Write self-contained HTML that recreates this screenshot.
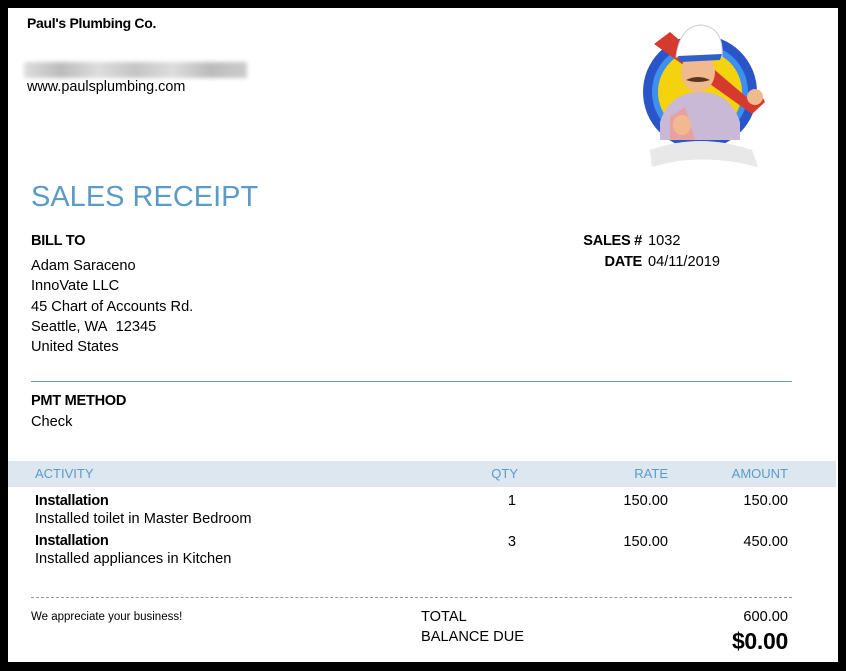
<!DOCTYPE html>
<html><head><meta charset="utf-8"><style>
html,body{margin:0;padding:0;}
body{width:846px;height:671px;background:#000;position:relative;overflow:hidden;font-family:"Liberation Sans",Arial,sans-serif;color:#000;}
#pg{position:absolute;left:8px;top:8px;width:830px;height:654px;background:#fff;}
.a{position:absolute;white-space:nowrap;}
.b{font-weight:bold;letter-spacing:-0.3px;}
.t{font-size:14.6px;}
.h{color:#5b9bc8;font-size:13px;}
.r{text-align:right;}
</style></head><body>
<div id="pg"></div>
<div class="a b" style="left:27px;top:15px;font-size:14px;">Paul's Plumbing Co.</div>
<div class="a" style="left:24px;top:62px;width:223px;height:16px;background:linear-gradient(90deg,#ddd,#bbb,#ddd,#c4c4c4,#ddd,#bbb,#ccc);filter:blur(2px);"></div>
<div class="a" style="left:27px;top:79px;font-size:14.4px;">www.paulsplumbing.com</div>

<svg class="a" style="left:640px;top:22px" width="130" height="150" viewBox="0 0 130 150">
<circle cx="60" cy="70" r="57" fill="#2a55c8"/>
<circle cx="60" cy="70" r="48" fill="#3d8ff0"/>
<circle cx="60" cy="70" r="42" fill="#f5d20e"/>
<path d="M14 22 L30 10 L110 78 L120 70 L125 80 L112 92 Z" fill="#d63a2e"/>
<path d="M20 100 Q30 70 60 70 Q90 70 100 100 L100 118 L20 118 Z" fill="#c9b8d6"/>
<path d="M30 95 L45 85 L55 118 L30 118 Z" fill="#e9a0a0"/>
<ellipse cx="58" cy="50" rx="17" ry="20" fill="#f0b98e"/>
<path d="M36 35 Q40 3 62 3 Q84 6 82 35 Z" fill="#fff" stroke="#ccd" stroke-width="1"/>
<path d="M38 34 L82 32 L80 38 L40 40 Z" fill="#2f5fc8"/>
<path d="M46 58 Q58 52 70 58 Q58 62 46 58 Z" fill="#5a3520"/>
<ellipse cx="42" cy="103" rx="9" ry="10" fill="#f0b98e"/>
<ellipse cx="115" cy="75" rx="8" ry="8" fill="#f0b98e"/>
<path d="M10 128 Q60 110 112 128 L118 145 Q60 130 12 145 Z" fill="#e8e8e8"/>
</svg>

<div class="a" style="left:31px;top:181px;font-size:29px;color:#5b9bc8;">SALES RECEIPT</div>

<div class="a b t" style="left:31px;top:233px;">BILL TO</div>
<div class="a t" style="left:31px;top:256px;line-height:20.3px;">Adam Saraceno<br>InnoVate LLC<br>45 Chart of Accounts Rd.<br>Seattle, WA&nbsp; 12345<br>United States</div>

<div class="a b t r" style="left:560px;width:82px;top:233px;">SALES #</div>
<div class="a t" style="left:648px;top:233px;">1032</div>
<div class="a b t r" style="left:560px;width:82px;top:254px;">DATE</div>
<div class="a t" style="left:648px;top:254px;">04/11/2019</div>

<div class="a" style="left:31px;top:381px;width:761px;height:1px;background:#6f9cc0;"></div>

<div class="a b t" style="left:31px;top:393px;">PMT METHOD</div>
<div class="a t" style="left:31px;top:414px;">Check</div>

<div class="a" style="left:8px;top:461px;width:828px;height:26px;background:#dce7ef;"></div>
<div class="a h" style="left:35px;top:466px;">ACTIVITY</div>
<div class="a h r" style="left:470px;width:48px;top:466px;">QTY</div>
<div class="a h r" style="left:600px;width:68px;top:466px;">RATE</div>
<div class="a h r" style="left:700px;width:88px;top:466px;">AMOUNT</div>

<div class="a b t" style="left:35px;top:493px;">Installation</div>
<div class="a t" style="left:35px;top:511px;">Installed toilet in Master Bedroom</div>
<div class="a t r" style="left:470px;width:46px;top:493px;">1</div>
<div class="a t r" style="left:580px;width:88px;top:493px;">150.00</div>
<div class="a t r" style="left:700px;width:88px;top:493px;">150.00</div>

<div class="a b t" style="left:35px;top:533px;">Installation</div>
<div class="a t" style="left:35px;top:551px;">Installed appliances in Kitchen</div>
<div class="a t r" style="left:470px;width:46px;top:534px;">3</div>
<div class="a t r" style="left:580px;width:88px;top:534px;">150.00</div>
<div class="a t r" style="left:700px;width:88px;top:534px;">450.00</div>

<div class="a" style="left:31px;top:597px;width:761px;border-top:1px dashed #999;"></div>
<div class="a" style="left:31px;top:611px;font-size:11.5px;">We appreciate your business!</div>
<div class="a t" style="left:421px;top:609px;">TOTAL</div>
<div class="a t" style="left:421px;top:629px;">BALANCE DUE</div>
<div class="a t r" style="left:680px;width:108px;top:609px;">600.00</div>
<div class="a b r" style="left:660px;width:128px;top:628px;font-size:23px;letter-spacing:-0.3px;">$0.00</div>
</body></html>
